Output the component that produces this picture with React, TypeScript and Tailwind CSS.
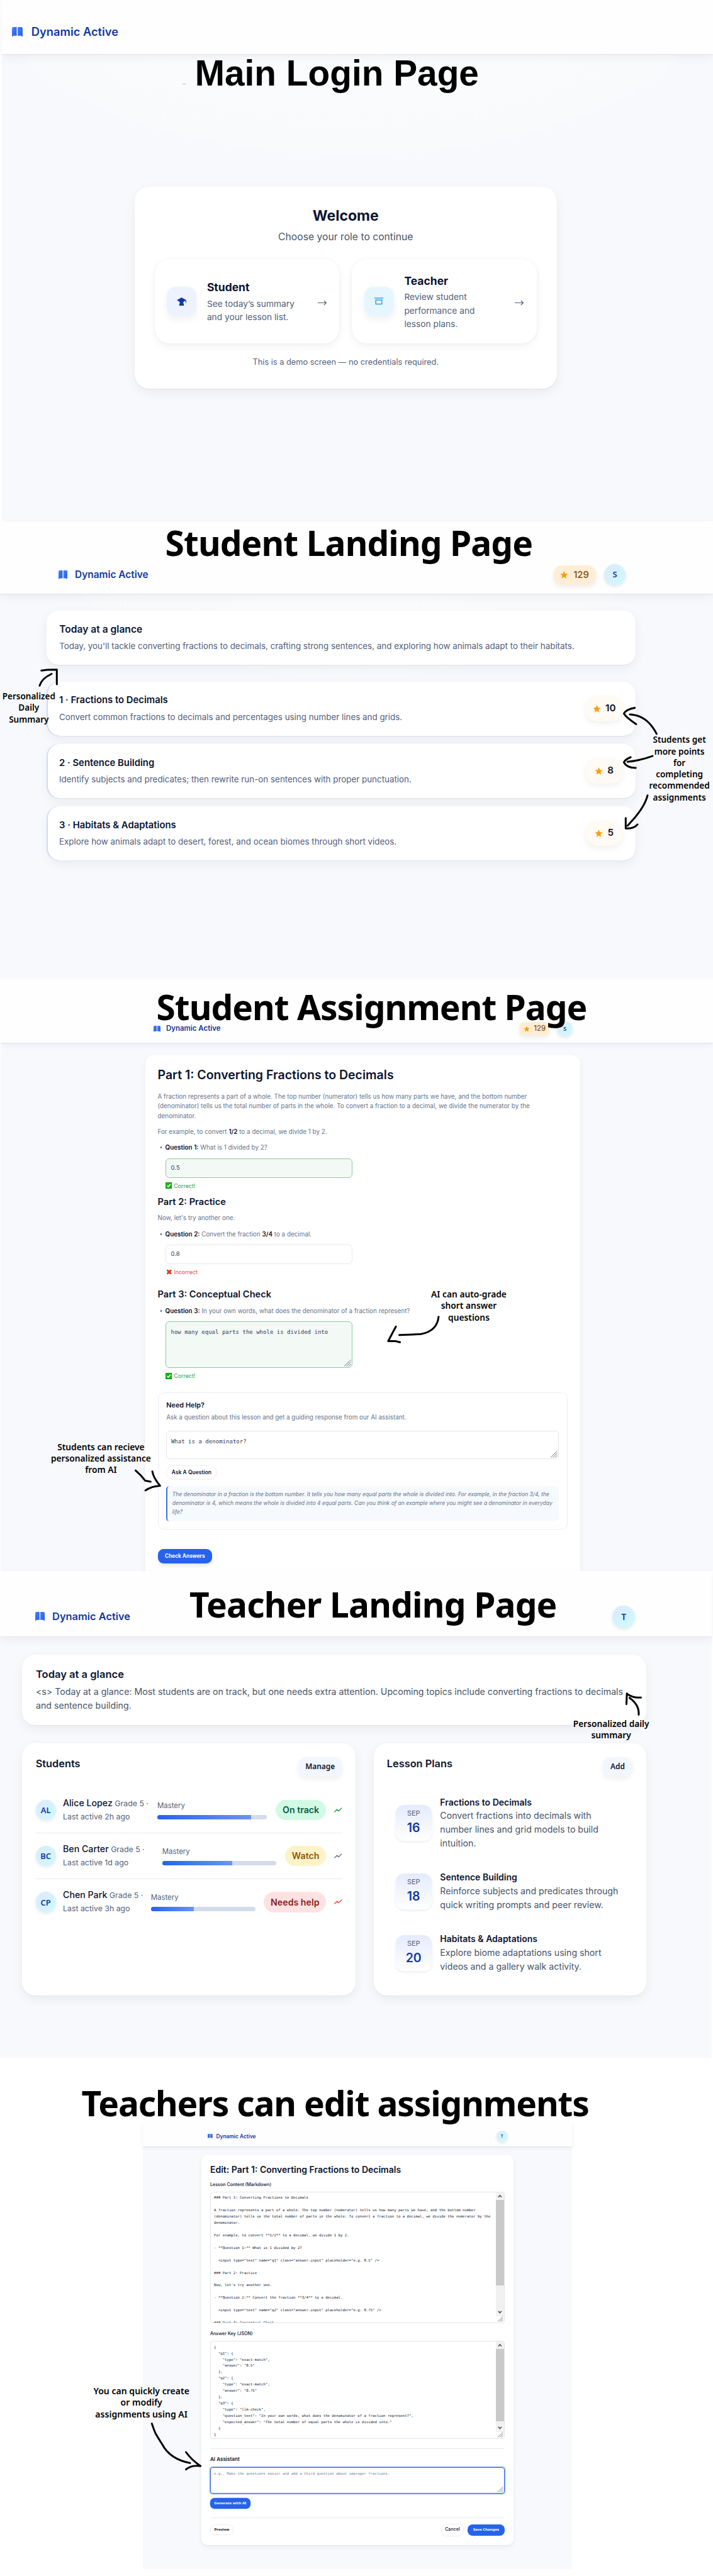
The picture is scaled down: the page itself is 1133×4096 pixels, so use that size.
import React from 'react';

const inter = "font-['Inter',sans-serif]";
const cardShadow = 'shadow-[0_6px_18px_rgba(15,23,42,0.06),0_1px_2px_rgba(15,23,42,0.05)]';
const heading = "whitespace-nowrap font-['Noto_Sans',sans-serif] font-bold text-black";

function Book({ className }: { className: string }) {
  return (
    <svg className={className} viewBox="0 0 28 26" preserveAspectRatio="none">
      <defs>
        <linearGradient id="bk" x1="0" y1="0" x2="1" y2="1">
          <stop offset="0" stopColor="#4f80f5" />
          <stop offset="1" stopColor="#1d5ceb" />
        </linearGradient>
      </defs>
      <path d="M4 0H12.5V23H4.5L0 26V4Q0 0 4 0Z" fill="url(#bk)" />
      <path d="M15 0H24Q28 0 28 4V26L23.5 23H15Z" fill="url(#bk)" />
    </svg>
  );
}

function Brand({ className }: { className: string }) {
  return <span className={`whitespace-nowrap font-semibold text-[#1138a0] ${className}`}>Dynamic Active</span>;
}

function Star({ className }: { className: string }) {
  return (
    <svg className={className} viewBox="0 0 24 24">
      <path d="M12 1l3.2 7.6 8 .7-6.1 5.3 1.9 8L12 18.3l-7 4.3 1.9-8L.8 9.3l8-.7z" fill="#f59e0b" />
    </svg>
  );
}

function Grip({ className }: { className: string }) {
  return (
    <svg className={`absolute right-px bottom-px ${className}`} viewBox="0 0 12 12">
      <path d="M1 11.5L11.5 1M4.5 11.5L11.5 4.5M8 11.5L11.5 8" stroke="#6b7280" strokeWidth="1" />
    </svg>
  );
}

function Scroll({ thumb, className }: { thumb: string; className: string }) {
  return (
    <div className={`absolute top-0 right-0 w-[12.7px] bg-[#f1f1f1] ${className}`}>
      <svg className="h-[12.5px] w-full" viewBox="0 0 12 12">
        <path d="M3.5 7.5L6 4.8L8.5 7.5" fill="none" stroke="#505050" strokeWidth="1.5" />
      </svg>
      <div className={`bg-[#c9c9c9] ${thumb}`} />
      <svg className="absolute bottom-0 h-[12.5px] w-full" viewBox="0 0 12 12">
        <path d="M3.5 4.5L6 7.2L8.5 4.5" fill="none" stroke="#505050" strokeWidth="1.5" />
      </svg>
    </div>
  );
}

/* Hand-drawn arrows that lie over a section. */
function Arrows({ top, height, paths }: { top: number; height: number; paths: string[] }) {
  return (
    <svg className="pointer-events-none absolute inset-0 z-20 h-full w-full" viewBox={`0 ${top} 1133 ${height}`} preserveAspectRatio="none">
      {paths.map((d) => (
        <path key={d} d={d} fill="none" stroke="#000" strokeWidth="3" strokeLinecap="round" strokeLinejoin="round" />
      ))}
    </svg>
  );
}

function Note({ lines, className }: { lines: string[]; className: string }) {
  return (
    <div className={`absolute z-20 flex flex-col items-center font-['Noto_Sans',sans-serif] font-semibold leading-[18.3px] whitespace-nowrap text-black ${className}`}>
      {lines.map((l) => (
        <span key={l}>{l}</span>
      ))}
    </div>
  );
}

function Avatar({ label, className }: { label: string; className: string }) {
  return (
    <div className={`flex shrink-0 items-center justify-center rounded-full bg-linear-to-br from-[#dbeafe] to-[#cffafe] font-['Noto_Sans',sans-serif] font-semibold text-[#1138a0] shadow-[0_2px_5px_rgba(15,23,42,0.10)] ${className}`}>
      {label}
    </div>
  );
}

function Login() {
  const roles = [
    { t: 'Student', l: ['See today’s summary', 'and your lesson list.'], c: 'bg-[#eef2ff]' },
    { t: 'Teacher', l: ['Review student', 'performance and', 'lesson plans.'], c: 'bg-[#e6f6fe]' },
  ];
  return (
    <section className="relative h-[829px] border-l-[3px] border-white bg-[#f8f9fd] bg-[radial-gradient(ellipse_560px_248px_at_556px_0px,#fcfdfd_0%,#f9fafc_99%,transparent_100%)]">
      <header className="flex h-[86px] items-center bg-[#fefefe] pt-[16px] pl-[15.8px] shadow-[0_6px_14px_rgba(15,23,42,0.05),0_1px_1px_rgba(15,23,42,0.05)]">
        <Book className="h-[15.5px] w-[17px]" />
        <Brand className="ml-[14px] text-[18.3px]" />
      </header>
      <h2 className="h-[62px] pl-[306.7px] font-['Liberation_Sans',sans-serif] text-[56.8px] leading-[62px] font-bold whitespace-nowrap text-black">
        Main Login Page
      </h2>
      <div className="absolute top-[133px] left-[287px] h-px w-[5px] bg-[#b5b8bd]" />
      <div className={`mt-[148.6px] ml-[211px] h-[321px] w-[670.6px] rounded-[23px] bg-white px-[31.8px] pt-[32.6px] text-center whitespace-nowrap ${cardShadow}`}>
        <div className="h-[28px] text-[23px] leading-[28px] font-bold text-[#0b1430]">Welcome</div>
        <div className="mt-[7.8px] h-[24px] text-[15.7px] leading-[24px] text-[#475569]">Choose your role to continue</div>
        <div className="mt-[23.5px] grid h-[133.3px] grid-cols-2 gap-[20px] text-left">
          {roles.map((r) => (
            <div key={r.t} className="flex items-center rounded-[24px] bg-white pr-[20px] pl-[19.5px] shadow-[0_5px_14px_rgba(15,23,42,0.05),0_0_6px_rgba(15,23,42,0.04)]">
              <div className={`flex h-[46.5px] w-[47px] items-center justify-center rounded-[14px] shadow-[0_6px_12px_rgba(15,23,42,0.06)] ${r.c}`}>
                {r.t === 'Student' ? (
                  <svg className="h-[13px] w-[15px]" viewBox="0 0 15 13">
                    <path d="M7.5 0L15 4.2V8.500H13.900V5L11.500 6.300Q11 8 9.800 8.300Q11.300 9.500 11.300 13H3.700Q3.700 9.500 5.200 8.300Q4 8 3.500 6.300L0 4.200Z" fill="#1138a8" />
                  </svg>
                ) : (
                  <svg className="h-[11.5px] w-[14px]" viewBox="0 0 14 11.5">
                    <path d="M0 .9H14M2.2 4.1H11.8V10.6H2.2Z" fill="none" stroke="#2ba5ee" strokeWidth="1.5" />
                  </svg>
                )}
              </div>
              <div className="ml-[16.6px]">
                <div className="text-[17.5px] leading-[30.4px] font-bold text-[#0b1430]">{r.t}</div>
                {r.l.map((x) => (
                  <div key={x} className="text-[13.75px] leading-[21.6px] text-[#52607a]">{x}</div>
                ))}
              </div>
              <svg className="mt-[4px] ml-auto h-[9px] w-[14.5px]" viewBox="0 0 14.5 9">
                <path d="M0 4.5H13.5M9.8 1L13.5 4.5L9.8 8" fill="none" stroke="#52607a" strokeWidth="1.2" />
              </svg>
            </div>
          ))}
        </div>
        <div className="mt-[20px] h-[20px] text-[12.8px] leading-[20px] text-[#52607a]">This is a demo screen — no credentials required.</div>
      </div>
    </section>
  );
}

function StudentLanding() {
  const lessons = [
    { t: '1 · Fractions to Decimals', d: 'Convert common fractions to decimals and percentages using number lines and grids.', p: '10' },
    { t: '2 · Sentence Building', d: 'Identify subjects and predicates; then rewrite run-on sentences with proper punctuation.', p: '8' },
    { t: '3 · Habitats & Adaptations', d: 'Explore how animals adapt to desert, forest, and ocean biomes through short videos.', p: '5' },
  ];
  return (
    <section className="relative h-[727px] bg-[#f8f9fd] bg-[radial-gradient(ellipse_480px_250px_at_555px_0px,#fcfdfd_0%,#f9fafc_99%,transparent_100%)]">
      <header className="h-[115px] bg-[#fefefe] pt-[4px] shadow-[0_6px_14px_rgba(15,23,42,0.05),0_1px_1px_rgba(15,23,42,0.05)]">
        <h2 className={`h-[60px] pl-[262.5px] text-[55px] leading-[60px] tracking-[-0.9px] ${heading}`}>Student Landing Page</h2>
        <div className="mt-[4px] flex h-[34px] items-center pr-[139.4px] pl-[92.5px]">
          <Book className="h-[14px] w-[14.5px]" />
          <Brand className="ml-[12px] text-[15.45px]" />
          <div className="ml-auto flex h-[31px] w-[67px] items-center rounded-[14px] bg-[#ffedd5] pl-[10.5px] shadow-[0_3px_7px_rgba(15,23,42,0.08)]">
            <Star className="h-[14px] w-[13px]" />
            <span className="ml-[8px] text-[15px] font-medium text-[#854d0e]">129</span>
          </div>
          <Avatar label="S" className="ml-[13.7px] h-[33.3px] w-[33.3px] text-[13px]" />
        </div>
      </header>
      <div className={`mt-[27px] ml-[73.7px] h-[86px] w-[936.5px] rounded-[19px] bg-white pt-[17.7px] pl-[20.5px] whitespace-nowrap ${cardShadow}`}>
        <div className="h-[24px] text-[15.6px] leading-[24px] font-semibold text-[#0b1430]">Today at a glance</div>
        <div className="mt-[2.5px] h-[24px] text-[13.38px] leading-[24px] text-[#52607a]">Today, you'll tackle converting fractions to decimals, crafting strong sentences, and exploring how animals adapt to their habitats.</div>
      </div>
      <div className="mt-[26.6px] ml-[73.7px] flex w-[936.5px] flex-col gap-[12.9px] whitespace-nowrap">
        {lessons.map((l) => (
          <div key={l.t} className="h-[86.2px] rounded-[19px] bg-[#d6e3fd] pl-[2px]">
            <div className={`flex h-full items-center rounded-[19px] bg-white pr-[20px] pl-[18.3px] ${cardShadow}`}>
              <div>
                <div className="h-[24px] text-[14.85px] leading-[24px] font-semibold text-[#0b1430]">{l.t}</div>
                <div className="mt-[2.5px] h-[24px] text-[13.38px] leading-[24px] text-[#52607a]">{l.d}</div>
              </div>
              <div className="ml-auto flex h-[40.5px] w-[60px] items-center justify-center gap-[7px] rounded-[19px] bg-[#fffaf3] text-[15.2px] font-semibold text-[#0b1430] shadow-[0_4px_10px_rgba(15,23,42,0.06)]">
                <Star className="h-[14px] w-[13px]" />
                {l.p}
              </div>
            </div>
          </div>
        ))}
      </div>
      <Note lines={['Personalized', 'Daily', 'Summary']} className="top-[269px] left-[-14.2px] w-[120px] text-[13.55px]" />
      <Note lines={['Students get', 'more points', 'for', 'completing', 'recommended', 'assignments']} className="top-[338.3px] left-[1019.6px] w-[120px] text-[13.55px]" />
      <Arrows top={829} height={727} paths={[
        'M62.9 1090.3Q66 1079 82 1071.5', 'M65.8 1066.2L75 1065L90.3 1064.8V1088',
        'M1043.4 1166.9Q1028 1137 1000.8 1136', 'M1008.7 1125.5Q995 1128 991.4 1134.6Q995 1141 1010.9 1151.5',
        'M1036.9 1202.1Q1015 1210 997.2 1211.2', 'M1002.2 1204Q993 1208 991.4 1212.2Q996 1221 1010.2 1220.9',
        'M1029 1264.7Q1025 1281 1008 1301L997.2 1312.9', 'M994.3 1300.8V1317.2Q1007 1318 1013 1311',
      ]} />
    </section>
  );
}

function Correct({ className }: { className: string }) {
  return (
    <div className={`flex h-[14px] items-center pl-[12.3px] text-[8.85px] text-[#28a34c] ${className}`}>
      <svg className="mr-[3px] h-[10px] w-[10.5px]" viewBox="0 0 10 10">
        <rect x=".4" y=".4" width="9.2" height="9.2" fill="#0cc00c" stroke="#0b6b12" strokeWidth=".8" />
        <path d="M2.3 5.2L4.2 7L7.7 2.8" fill="none" stroke="#fff" strokeWidth="1.5" />
      </svg>
      Correct!
    </div>
  );
}

function Question({ n, className, children }: { n: number; className: string; children: React.ReactNode }) {
  return (
    <div className={`flex h-[15.5px] items-center pl-[4.2px] text-[9.9px] leading-[15.5px] text-[#64748b] ${className}`}>
      <span className="mr-[5.3px] h-[2.6px] w-[2.6px] rounded-full bg-[#475569]" />
      <span><b className="font-semibold text-[#0b1430]">Question {n}:</b> {children}</span>
    </div>
  );
}

function StudentAssignment() {
  return (
    <section className="relative h-[942px] overflow-hidden border-l border-white bg-[#f8f9fd]">
      <header className="h-[102px] bg-[#fefefe] pt-[15px] shadow-[0_4px_10px_rgba(15,23,42,0.05),0_1px_1px_rgba(15,23,42,0.05)]">
        <h2 className={`relative z-10 h-[60px] pl-[247.5px] text-[55px] leading-[60px] tracking-[-1px] ${heading}`}>Student Assignment Page</h2>
        <div className="-mt-[7.4px] flex h-[24.5px] items-center pl-[243.2px]">
          <Book className="h-[9.8px] w-[11px]" />
          <Brand className="ml-[8.8px] text-[11.45px]" />
          <div className="ml-[474.8px] flex h-[22.5px] w-[47.7px] items-center rounded-[9px] bg-[#ffedd5] pl-[7px] shadow-[0_3px_6px_rgba(15,23,42,0.07)]">
            <Star className="h-[10px] w-[10px]" />
            <span className="ml-[6px] text-[11.3px] font-medium text-[#854d0e]">129</span>
          </div>
          <Avatar label="S" className="ml-[12.4px] h-[24.5px] w-[24.5px] text-[9.5px]" />
        </div>
      </header>
      <div className="mt-[19.3px] ml-[229.5px] h-[840px] w-[691.5px] rounded-[15px] bg-white px-[20px] pt-[19.9px] whitespace-nowrap shadow-[0_3px_10px_rgba(15,23,42,0.06)]">
        <div className="h-[24px] text-[19.5px] leading-[24px] font-semibold text-[#0b1430]">Part 1: Converting Fractions to Decimals</div>
        <p className="mt-[14.7px] text-[9.89px] leading-[15.5px] text-[#64748b]">
          A fraction represents a part of a whole. The top number (numerator) tells us how many parts we have, and the bottom number<br />
          (denominator) tells us the total number of parts in the whole. To convert a fraction to a decimal, we divide the numerator by the<br />
          denominator.
        </p>
        <p className="mt-[9.7px] text-[9.89px] leading-[15.5px] text-[#64748b]">For example, to convert <b className="font-semibold text-[#0b1430]">1/2</b> to a decimal, we divide 1 by 2.</p>
        <Question n={1} className="mt-[9.1px]">What is 1 divided by 2?</Question>
        <div className="mt-[9.8px] ml-[12.3px] flex h-[31.2px] w-[297px] items-center rounded-[6px] border border-[#8ccb9d] bg-[#f3f9f5] pl-[7.7px] text-[9.6px] text-[#334155]">0.5</div>
        <Correct className="mt-[5px]" />
        <div className="mt-[8.7px] h-[20px] text-[14.65px] leading-[20px] font-semibold text-[#0b1430]">Part 2: Practice</div>
        <p className="mt-[8.1px] text-[9.89px] leading-[15.5px] text-[#64748b]">Now, let's try another one.</p>
        <Question n={2} className="mt-[10.2px]">Convert the fraction <b className="font-semibold text-[#0b1430]">3/4</b> to a decimal.</Question>
        <div className="mt-[9.2px] ml-[12.3px] flex h-[30.6px] w-[297px] items-center rounded-[6px] border border-[#e6e8ec] bg-white pl-[7.7px] text-[9.6px] text-[#334155]">0.8</div>
        <div className="mt-[5.4px] flex h-[14px] items-center pl-[13.3px] text-[8.8px] text-[#ef4444]">
          <svg className="mr-[3px] h-[9px] w-[9.5px]" viewBox="0 0 10 10">
            <path d="M1.5 1.5L8.5 8.5M8.5 1.5L1.5 8.5" stroke="#7a2413" strokeWidth="3" />
            <path d="M1.7 1.7L8.3 8.3M8.3 1.7L1.7 8.3" stroke="#e8401c" strokeWidth="2" />
          </svg>
          Incorrect
        </div>
        <div className="mt-[18.7px] h-[20px] text-[14.65px] leading-[20px] font-semibold text-[#0b1430]">Part 3: Conceptual Check</div>
        <Question n={3} className="mt-[8.8px]">In your own words, what does the denominator of a fraction represent?</Question>
        <div className="relative mt-[9.1px] ml-[12.3px] h-[74.1px] w-[297px] rounded-[6px] border border-[#8ccb9d] bg-[#f3f9f5] pt-[8.2px] pl-[7.7px] font-['DejaVu_Sans_Mono',monospace] text-[9.03px] leading-[14px] text-[#334155]">
          how many equal parts the whole is divided into
          <Grip className="h-[12px] w-[12px]" />
        </div>
        <Correct className="mt-[5.3px]" />
        <div className="mt-[18.9px] h-[218.2px] rounded-[9px] border border-[#eceef2] bg-white px-[12.7px] pt-[11.1px]">
          <div className="h-[16px] text-[10.9px] leading-[16px] font-semibold text-[#0b1430]">Need Help?</div>
          <div className="mt-[4.1px] h-[14px] text-[9.86px] leading-[14px] text-[#64748b]">Ask a question about this lesson and get a guiding response from our AI assistant.</div>
          <div className="relative mt-[15.6px] h-[45px] rounded-[6px] border border-[#e2e5ea] pt-[8.2px] pl-[6.7px] font-['DejaVu_Sans_Mono',monospace] text-[9.06px] leading-[14px] text-[#334155]">
            What is a denominator?
            <Grip className="h-[12px] w-[12px]" />
          </div>
          <div className="mt-[9.1px] flex h-[23px] w-[80.5px] items-center justify-center rounded-[12px] border border-[#eceef2] text-[8.5px] font-semibold text-[#0b1430]">Ask A Question</div>
          <div className="mt-[10.3px] h-[55.7px] rounded-[5px] border-l-2 border-[#3b6fe8] bg-[#f6f9fe] pt-[7.6px] pl-[7.6px] text-[8.6px] leading-[13.9px] text-[#64748b] italic">
            The denominator in a fraction is the bottom number. It tells you how many equal parts the whole is divided into. For example, in the fraction 3/4, the<br />
            denominator is 4, which means the whole is divided into 4 equal parts. Can you think of an example where you might see a denominator in everyday<br />
            life?
          </div>
        </div>
        <div className="mt-[30.7px] flex h-[23.7px] w-[86.7px] items-center justify-center rounded-[9px] bg-[#2563eb] text-[8.25px] font-bold text-white shadow-[0_3px_6px_rgba(15,23,42,0.12)]">Check Answers</div>
      </div>
      <Note lines={['AI can auto-grade', 'short answer', 'questions']} className="top-[493px] left-[664px] w-[160px] text-[13.8px]" />
      <Note lines={['Students can recieve', 'personalized assistance', 'from AI']} className="top-[735.6px] left-[59.4px] w-[200px] text-[13.75px]" />
      <Arrows top={1556} height={942} paths={[
        'M696.6 2093.7Q694 2117 668.4 2121.2L655 2122L634 2122.8', 'M628.7 2109.2L624 2118L616.4 2132.5L628 2132.5L635.2 2134.2',
        'M214.6 2338.1L223 2346L229.8 2354.3L238.5 2355.9', 'M241.3 2339.7Q243 2350 253.6 2362.4Q240 2363 230.5 2369.8',
      ]} />
    </section>
  );
}

function TeacherLanding() {
  const students = [
    { i: 'AL', n: 'Alice Lopez', a: 'Last active 2h ago', nw: 'w-[161.2px]', fill: 'w-[85.8%]', s: 'On track', pill: 'w-[80.2px] bg-[#d1fae5] text-[#065f46]', c: '#16a34a' },
    { i: 'BC', n: 'Ben Carter', a: 'Last active 1d ago', nw: 'w-[169.1px]', fill: 'w-[61.5%]', s: 'Watch', pill: 'w-[65px] bg-[#fef3c7] text-[#92560e]', c: '#64748b' },
    { i: 'CP', n: 'Chen Park', a: 'Last active 3h ago', nw: 'w-[151px]', fill: 'w-[41%]', s: 'Needs help', pill: 'w-[98.8px] bg-[#fee2e2] text-[#8a1c1c]', c: '#ef4444' },
  ];
  const plans = [
    { d: '16', t: 'Fractions to Decimals', l: ['Convert fractions into decimals with', 'number lines and grid models to build', 'intuition.'] },
    { d: '18', t: 'Sentence Building', l: ['Reinforce subjects and predicates through', 'quick writing prompts and peer review.'] },
    { d: '20', t: 'Habitats & Adaptations', l: ['Explore biome adaptations using short', 'videos and a gallery walk activity.'] },
  ];
  const btn = "flex h-[31.4px] items-center justify-center rounded-[13px] bg-[#f2f6fe] font-['Noto_Sans',sans-serif] text-[11.9px] font-semibold text-[#0b1430] shadow-[0_4px_9px_rgba(15,23,42,0.06)]";
  return (
    <section className="relative h-[774px] border-r-2 border-white bg-[#f8f9fd]">
      <header className="flex h-[104.4px] items-start bg-[#fefefe] pt-[23.2px] pl-[55.6px] shadow-[0_6px_14px_rgba(15,23,42,0.05),0_1px_1px_rgba(15,23,42,0.05)]">
        <div className="mt-[31.4px] flex h-[36px] w-[242.4px] items-center">
          <Book className="h-[14.5px] w-[15px]" />
          <Brand className="ml-[12.5px] text-[16.4px]" />
        </div>
        <h2 className={`h-[60px] w-[675.3px] pl-[3px] text-[55px] leading-[60px] tracking-[-0.8px] ${heading}`}>Teacher Landing Page</h2>
        <Avatar label="T" className="mt-[31.5px] h-[36px] w-[36px] text-[14px]" />
      </header>
      <div className={`mt-[28.3px] ml-[35.4px] h-[112.8px] w-[991.4px] rounded-[21px] bg-white pt-[19.3px] pl-[21.6px] whitespace-nowrap ${cardShadow}`}>
        <div className="h-[24px] text-[16.55px] leading-[24px] font-semibold text-[#0b1430]">Today at a glance</div>
        <div className="mt-[4.9px] text-[14.18px] leading-[21.8px] text-[#475569]">
          &lt;s&gt; Today at a glance: Most students are on track, but one needs extra attention. Upcoming topics include converting fractions to decimals<br />
          and sentence building.
        </div>
      </div>
      <div className="mt-[28.3px] ml-[35.4px] flex h-[401.4px] gap-[29px] whitespace-nowrap">
        <div className={`w-[529.6px] rounded-[21px] bg-white px-[21.3px] pt-[21.8px] ${cardShadow}`}>
          <div className="flex items-start justify-between">
            <div className="h-[20px] text-[16.35px] leading-[20px] font-semibold text-[#0b1430]">Students</div>
            <div className={`w-[70px] ${btn}`}>Manage</div>
          </div>
          <div className="mt-[17px] divide-y divide-[#e8eaee]">
            {students.map((s) => (
              <div key={s.i} className="flex h-[73px] items-center">
                <Avatar label={s.i} className="h-[32.5px] w-[32px] pt-[2px] text-[13px]" />
                <div className={`shrink-0 pl-[11.3px] text-[12.35px] leading-[22.3px] text-[#52607a] ${s.nw}`}>
                  <div className="h-[22.3px]"><span className="text-[14.2px] font-medium text-[#0b1430]">{s.n}</span> Grade 5 ·</div>
                  <div className="h-[22.3px]">{s.a}</div>
                </div>
                <div className="flex-1">
                  <div className="h-[16px] text-[11.45px] leading-[16px] text-[#52607a]">Mastery</div>
                  <div className="mt-[7px] h-[7px] overflow-hidden rounded-[4px] bg-[#d3dbec]">
                    <div className={`h-full bg-linear-to-r from-[#2563eb] to-[#6b93f2] ${s.fill}`} />
                  </div>
                </div>
                <div className={`ml-[13.8px] flex h-[32.3px] items-center justify-center rounded-full text-[14.2px] font-semibold ${s.pill}`}>{s.s}</div>
                <svg className="ml-[13px] h-[8px] w-[12.5px]" viewBox="0 0 12.5 8">
                  <path d="M.7 7L4.5 3.2L7.2 5.6L11.8 1" fill="none" stroke={s.c} strokeWidth="1.3" strokeLinecap="round" />
                </svg>
              </div>
            ))}
          </div>
        </div>
        <div className={`w-[432.8px] rounded-[21px] bg-white pt-[21.8px] pr-[21.8px] pl-[20.8px] ${cardShadow}`}>
          <div className="flex items-start justify-between">
            <div className="h-[20px] text-[16.35px] leading-[20px] font-semibold text-[#0b1430]">Lesson Plans</div>
            <div className={`w-[47px] ${btn}`}>Add</div>
          </div>
          <div className="mt-[30.6px] ml-[13.9px] flex flex-col gap-[34px]">
            {plans.map((p) => (
              <div key={p.d} className="flex items-center">
                <div className="flex h-[57px] w-[57px] flex-col items-center rounded-[13px] bg-linear-to-b from-[#e4ebfd] to-white pt-[4px] shadow-[0_2px_4px_rgba(15,23,42,0.08)]">
                  <span className="text-[10.9px] leading-[18px] text-[#52607a]">SEP</span>
                  <span className="mt-[3.5px] text-[19.5px] leading-[22px] font-semibold text-[#1138a0]">{p.d}</span>
                </div>
                <div className="ml-[13.7px]">
                  <div className="text-[14px] leading-[20.6px] font-semibold text-[#0b1430]">{p.t}</div>
                  {p.l.map((x) => (
                    <div key={x} className="text-[14.15px] leading-[21.7px] text-[#475569]">{x}</div>
                  ))}
                </div>
              </div>
            ))}
          </div>
        </div>
      </div>
      <Note lines={['Personalized daily', 'summary']} className="top-[234px] left-[891.2px] w-[160px] text-[13.7px]" />
      <Arrows top={2498} height={774} paths={[
        'M1016.7 2726.5Q1018 2711 1002.2 2699.7', 'M997.2 2709.7L997.9 2692.8Q1006 2700 1020.3 2699.2',
      ]} />
    </section>
  );
}

const markdown = `### Part 1: Converting Fractions to Decimals

A fraction represents a part of a whole. The top number (numerator) tells us how many parts we have, and the bottom number
(denominator) tells us the total number of parts in the whole. To convert a fraction to a decimal, we divide the numerator by the
denominator.

For example, to convert **1/2** to a decimal, we divide 1 by 2.

- **Question 1:** What is 1 divided by 2?

  <input type="text" name="q1" class="answer-input" placeholder="e.g. 0.5" />

### Part 2: Practice

Now, let's try another one.

- **Question 2:** Convert the fraction **3/4** to a decimal.

  <input type="text" name="q2" class="answer-input" placeholder="e.g. 0.75" />

### Part 3: Conceptual Check`;

const answerKey = `{
  "q1": {
    "type": "exact-match",
    "answer": "0.5"
  },
  "q2": {
    "type": "exact-match",
    "answer": "0.75"
  },
  "q3": {
    "type": "llm-check",
    "question_text": "In your own words, what does the denominator of a fraction represent?",
    "expected_answer": "The total number of equal parts the whole is divided into."
  }
}`;

function TeacherEdit() {
  const area = "relative overflow-hidden rounded-[4px] border border-[#e2e5ea] bg-white pl-[5.1px] font-['DejaVu_Sans_Mono',monospace] text-[5.66px] leading-[9.94px] text-[#0b1430]";
  const small = "font-['Noto_Sans',sans-serif] text-[6.05px] font-bold";
  const label = 'h-[10px] text-[7.16px] leading-[10px] font-medium text-[#0b1430]';
  return (
    <section className="relative h-[824px] bg-white">
      <h2 className={`h-[101.7px] pt-[41.7px] pl-[129.5px] text-[55px] leading-[60px] tracking-[-1.15px] ${heading}`}>Teachers can edit assignments</h2>
      <div className="ml-[226.9px] h-[711.3px] w-[682.3px] bg-[#f8f9fd] whitespace-nowrap">
        <header className="flex h-[39px] items-center bg-[#fefefe] pt-[7.4px] pr-[102.6px] pl-[103.3px] shadow-[0_3px_8px_rgba(15,23,42,0.05),0_1px_1px_rgba(15,23,42,0.06)]">
          <Book className="h-[7.2px] w-[7.7px]" />
          <Brand className="ml-[5.7px] text-[8.33px]" />
          <Avatar label="T" className="ml-auto h-[17.7px] w-[17.7px] text-[6.7px]" />
        </header>
        <div className="mt-[13.7px] ml-[93.1px] h-[621px] w-[495.8px] rounded-[10px] bg-white px-[14px] pt-[15.2px] shadow-[0_3px_9px_rgba(15,23,42,0.06),0_1px_1px_rgba(15,23,42,0.04)]">
          <div className="h-[16px] text-[14px] leading-[16px] font-semibold text-[#0b1430]">Edit: Part 1: Converting Fractions to Decimals</div>
          <div className={`mt-[11.8px] ${label}`}>Lesson Content (Markdown)</div>
          <div className={`mt-[5.4px] h-[209.6px] pt-[4.6px] ${area}`}>
            <pre className="font-['DejaVu_Sans_Mono',monospace]">{markdown}</pre>
            <Scroll className="h-[197px]" thumb="h-[136px]" />
            <Grip className="h-[10px] w-[10px]" />
          </div>
          <div className={`mt-[11.8px] ${label}`}>Answer Key (JSON)</div>
          <div className={`mt-[5.7px] h-[156.6px] pt-[4.8px] ${area}`}>
            <pre className="font-['DejaVu_Sans_Mono',monospace]">{answerKey}</pre>
            <Scroll className="h-[143.7px]" thumb="h-[115px]" />
            <Grip className="h-[10px] w-[10px]" />
          </div>
          <div className="mt-[14.6px] h-px bg-[#e8eaee]" />
          <div className="mt-[10.2px] h-[12px] text-[8.1px] leading-[12px] font-semibold text-[#0b1430]">AI Assistant</div>
          <div className="relative mt-[6.4px] h-[42.3px] rounded-[4px] border border-[#2563eb] pt-[5px] pl-[5.1px] font-['DejaVu_Sans_Mono',monospace] text-[5.66px] leading-[9.94px] text-[#757a84] shadow-[0_0_0_1.5px_#a9c3f8]">
            e.g., Make the questions easier and add a third question about improper fractions.
            <Grip className="h-[10px] w-[10px]" />
          </div>
          <div className={`mt-[7.2px] flex h-[16.7px] w-[63.7px] items-center justify-center rounded-[7px] bg-[#2563eb] text-white shadow-[0_0_0_0.5px_#93b4f6] ${small}`}>Generate with AI</div>
          <div className="mt-[14.5px] h-px bg-[#e8eaee]" />
          <div className="mt-[8.5px] flex h-[20px] items-center">
            <div className={`flex h-[16.7px] w-[37px] items-center justify-center rounded-[8px] border border-[#eceef2] text-[#0b1430] ${small}`}>Preview</div>
            <div className="ml-auto flex h-[20px] w-[36.3px] items-center justify-center rounded-[9px] border border-[#eceef2] text-[7.1px] font-medium text-[#0b1430]">Cancel</div>
            <div className={`ml-[6px] flex h-[17.8px] w-[58.7px] items-center justify-center rounded-[8px] bg-[#2563eb] text-white ${small}`}>Save Changes</div>
          </div>
        </div>
      </div>
      <Note lines={['You can quickly create', 'or modify', 'assignments using AI']} className="top-[521px] left-[124.7px] w-[200px] text-[14.05px]" />
      <Arrows top={3272} height={824} paths={[
        'M241.3 3853.6Q244 3862 247 3869Q254 3881 258 3887Q270 3910 302 3916.4', 'M295.5 3899Q304 3911 318.7 3921.2Q305 3919 295.5 3926.5',
      ]} />
    </section>
  );
}

export default function App() {
  return (
    <main className={`relative h-[4096px] w-[1133px] overflow-hidden bg-white ${inter}`}>
      <Login />
      <StudentLanding />
      <StudentAssignment />
      <TeacherLanding />
      <TeacherEdit />
    </main>
  );
}
